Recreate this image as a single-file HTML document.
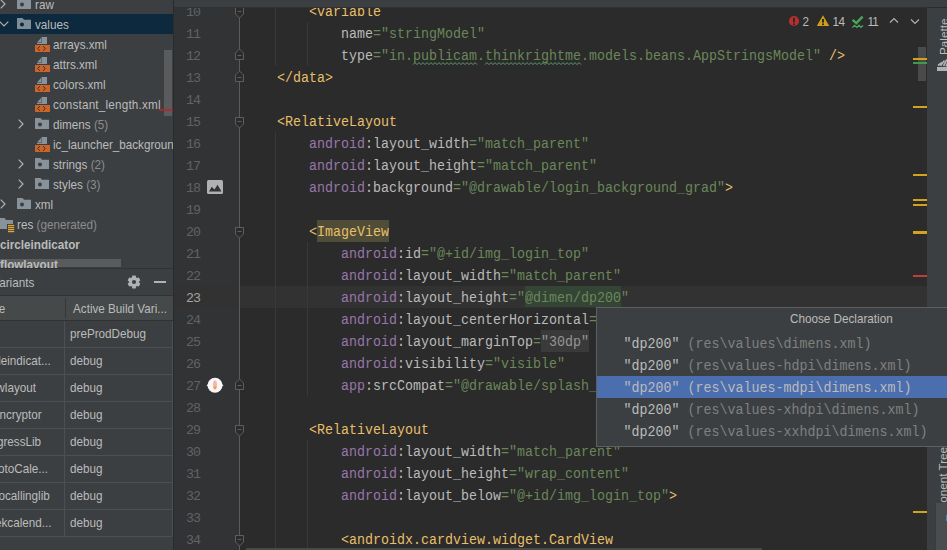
<!DOCTYPE html>
<html><head><meta charset="utf-8"><style>
*{margin:0;padding:0;box-sizing:border-box}
html,body{width:947px;height:550px;overflow:hidden;background:#2B2B2B}
body{position:relative;font-family:"Liberation Sans",sans-serif}
.a{position:absolute}
svg{position:absolute;overflow:visible}
#left{position:absolute;left:0;top:0;width:173px;height:550px;background:#3C3F41;overflow:hidden}
.tr{position:absolute;left:0;height:20px;width:173px;font-size:11.7px;line-height:20px;color:#BBBBBB;white-space:nowrap}
.tt{position:absolute;top:0.5px;transform:scaleY(1.07);transform-origin:0 14.06px}
.gr{color:#8C8C8C}
.ln{position:absolute;left:170px;width:30px;letter-spacing:-1px;text-align:right;font-family:"Liberation Mono",monospace;font-size:13.333px;line-height:22px;color:#606366;height:22px}
.cl{position:absolute;left:245px;height:22px;font-family:"Liberation Mono",monospace;font-size:13.333px;line-height:22px;white-space:pre;color:#A9B7C6;transform:scaleY(1.12);transform-origin:0 14.6px}
.tg{color:#E8BF6A}
.at{color:#BABABA}
.ns{color:#9876AA}
.vl{color:#6A8759}
.bv{position:absolute;height:27px;font-size:11.7px;line-height:27px;color:#BBBBBB;white-space:nowrap;transform:scaleY(1.07);transform-origin:0 17.55px}
.pi{position:absolute;left:0;width:400px;height:22px;font-family:"Liberation Mono",monospace;font-size:13.333px;line-height:22px;white-space:pre;color:#BBBBBB;transform:scaleY(1.1);transform-origin:0 14.6px}
.pg{color:#808080}
</style></head><body>
<div id="left">
<div class="a" style="left:0;top:14px;width:173px;height:20px;background:#0D293E"></div>
<svg style="left:0px;top:-1.5px" width="6" height="10" viewBox="0 0 6 10"><path d="M0.7 0.7L5 5L0.7 9.3" stroke="#AFB1B3" stroke-width="1.2" fill="none"/></svg>
<svg class="fi" style="left:17px;top:-2px" width="14" height="11" viewBox="0 0 14 11"><path d="M0 0H5.5L7 1.8H14V11H0Z" fill="#9AA7B0" fill-opacity="0.8"/><circle cx="5" cy="6.4" r="2" fill="#3C3F41"/></svg>
<div class="tr" style="top:-6px"><span class="tt" style="left:35px;">raw</span></div>
<svg style="left:-1px;top:21px" width="10" height="6" viewBox="0 0 10 6"><path d="M0.7 0.7L5 5L9.3 0.7" stroke="#AFB1B3" stroke-width="1.2" fill="none"/></svg>
<svg class="fi" style="left:17px;top:18px" width="14" height="11" viewBox="0 0 14 11"><path d="M0 0H5.5L7 1.8H14V11H0Z" fill="#9AA7B0" fill-opacity="0.8"/><circle cx="5" cy="6.4" r="2" fill="#0D293E"/></svg>
<div class="tr" style="top:14px"><span class="tt" style="left:35px;">values</span></div>
<svg style="left:35px;top:37px" width="15" height="18" viewBox="0 0 15 18"><path d="M2 6H6.5V0H12V7H2Z" fill="#9AA7B0" fill-opacity="0.8"/><path d="M2 5.5L6 1V5.5Z" fill="#9AA7B0" fill-opacity="0.8"/><rect x="0" y="8" width="15" height="7" fill="#C8652C"/><path d="M5 9.2L2.6 11.5L5 13.8M8 9.2L10.4 11.5L8 13.8" stroke="#4A2410" stroke-width="0.9" fill="none"/></svg>
<div class="tr" style="top:34px"><span class="tt" style="left:53px;">arrays.xml</span></div>
<svg style="left:35px;top:57px" width="15" height="18" viewBox="0 0 15 18"><path d="M2 6H6.5V0H12V7H2Z" fill="#9AA7B0" fill-opacity="0.8"/><path d="M2 5.5L6 1V5.5Z" fill="#9AA7B0" fill-opacity="0.8"/><rect x="0" y="8" width="15" height="7" fill="#C8652C"/><path d="M5 9.2L2.6 11.5L5 13.8M8 9.2L10.4 11.5L8 13.8" stroke="#4A2410" stroke-width="0.9" fill="none"/></svg>
<div class="tr" style="top:54px"><span class="tt" style="left:53px;">attrs.xml</span></div>
<svg style="left:35px;top:77px" width="15" height="18" viewBox="0 0 15 18"><path d="M2 6H6.5V0H12V7H2Z" fill="#9AA7B0" fill-opacity="0.8"/><path d="M2 5.5L6 1V5.5Z" fill="#9AA7B0" fill-opacity="0.8"/><rect x="0" y="8" width="15" height="7" fill="#C8652C"/><path d="M5 9.2L2.6 11.5L5 13.8M8 9.2L10.4 11.5L8 13.8" stroke="#4A2410" stroke-width="0.9" fill="none"/></svg>
<div class="tr" style="top:74px"><span class="tt" style="left:53px;">colors.xml</span></div>
<svg style="left:35px;top:97px" width="15" height="18" viewBox="0 0 15 18"><path d="M2 6H6.5V0H12V7H2Z" fill="#9AA7B0" fill-opacity="0.8"/><path d="M2 5.5L6 1V5.5Z" fill="#9AA7B0" fill-opacity="0.8"/><rect x="0" y="8" width="15" height="7" fill="#C8652C"/><path d="M5 9.2L2.6 11.5L5 13.8M8 9.2L10.4 11.5L8 13.8" stroke="#4A2410" stroke-width="0.9" fill="none"/></svg>
<div class="tr" style="top:94px"><span class="tt" style="left:53px;letter-spacing:0.2px;">constant_length.xml</span></div>
<svg style="left:18px;top:118.5px" width="6" height="10" viewBox="0 0 6 10"><path d="M0.7 0.7L5 5L0.7 9.3" stroke="#AFB1B3" stroke-width="1.2" fill="none"/></svg>
<svg class="fi" style="left:35px;top:118px" width="14" height="11" viewBox="0 0 14 11"><path d="M0 0H5.5L7 1.8H14V11H0Z" fill="#9AA7B0" fill-opacity="0.8"/><circle cx="5" cy="6.4" r="2" fill="#3C3F41"/></svg>
<div class="tr" style="top:114px"><span class="tt" style="left:53px;">dimens<span class="gr"> (5)</span></span></div>
<svg style="left:35px;top:137px" width="15" height="18" viewBox="0 0 15 18"><path d="M2 6H6.5V0H12V7H2Z" fill="#9AA7B0" fill-opacity="0.8"/><path d="M2 5.5L6 1V5.5Z" fill="#9AA7B0" fill-opacity="0.8"/><rect x="0" y="8" width="15" height="7" fill="#C8652C"/><path d="M5 9.2L2.6 11.5L5 13.8M8 9.2L10.4 11.5L8 13.8" stroke="#4A2410" stroke-width="0.9" fill="none"/></svg>
<div class="tr" style="top:134px"><span class="tt" style="left:53px;">ic_launcher_background.xml</span></div>
<svg style="left:18px;top:158.5px" width="6" height="10" viewBox="0 0 6 10"><path d="M0.7 0.7L5 5L0.7 9.3" stroke="#AFB1B3" stroke-width="1.2" fill="none"/></svg>
<svg class="fi" style="left:35px;top:158px" width="14" height="11" viewBox="0 0 14 11"><path d="M0 0H5.5L7 1.8H14V11H0Z" fill="#9AA7B0" fill-opacity="0.8"/><circle cx="5" cy="6.4" r="2" fill="#3C3F41"/></svg>
<div class="tr" style="top:154px"><span class="tt" style="left:53px;">strings<span class="gr"> (2)</span></span></div>
<svg style="left:18px;top:178.5px" width="6" height="10" viewBox="0 0 6 10"><path d="M0.7 0.7L5 5L0.7 9.3" stroke="#AFB1B3" stroke-width="1.2" fill="none"/></svg>
<svg class="fi" style="left:35px;top:178px" width="14" height="11" viewBox="0 0 14 11"><path d="M0 0H5.5L7 1.8H14V11H0Z" fill="#9AA7B0" fill-opacity="0.8"/><circle cx="5" cy="6.4" r="2" fill="#3C3F41"/></svg>
<div class="tr" style="top:174px"><span class="tt" style="left:53px;">styles<span class="gr"> (3)</span></span></div>
<svg style="left:0px;top:198.5px" width="6" height="10" viewBox="0 0 6 10"><path d="M0.7 0.7L5 5L0.7 9.3" stroke="#AFB1B3" stroke-width="1.2" fill="none"/></svg>
<svg class="fi" style="left:17px;top:198px" width="14" height="11" viewBox="0 0 14 11"><path d="M0 0H5.5L7 1.8H14V11H0Z" fill="#9AA7B0" fill-opacity="0.8"/><circle cx="5" cy="6.4" r="2" fill="#3C3F41"/></svg>
<div class="tr" style="top:194px"><span class="tt" style="left:35px;">xml</span></div>
<svg style="left:0px;top:218px" width="15" height="15" viewBox="0 0 15 15"><path d="M0 0H4.5L6 2H13V6H7V11H0Z" fill="#9AA7B0" fill-opacity="0.8"/><rect x="8" y="6.9" width="6.2" height="1.3" fill="#E3A535"/><rect x="8" y="8.9" width="6.2" height="1.3" fill="#E3A535"/><rect x="8" y="10.9" width="6.2" height="1.3" fill="#E3A535"/><rect x="8" y="12.9" width="6.2" height="1.3" fill="#E3A535"/></svg>
<div class="tr" style="top:214px"><span class="tt" style="left:17px">res<span class="gr"> (generated)</span></span></div>
<div class="tr" style="top:234px;font-weight:bold"><span class="tt" style="left:0px">circleindicator</span></div>
<div class="a" style="left:0;top:259px;width:121px;height:8px;background:#595B5D"></div>
<div class="tr" style="top:254px;height:14px;overflow:hidden;font-weight:bold"><span class="tt" style="left:0px">flowlayout</span></div>
<div class="a" style="left:164px;top:50px;width:8px;height:66px;background:#595B5D"></div>
<div class="a" style="left:159px;top:109px;width:14px;height:2px;background:rgba(185,38,38,0.8)"></div>
<div class="a" style="left:0;top:268px;width:173px;height:1px;background:#323232"></div>
<div class="tr" style="top:272px"><span class="tt" style="left:-37px">Build Variants</span></div>
<svg style="left:127px;top:275px" width="14" height="14" viewBox="0 0 14 14"><path d="M4.85 2.60 L5.40 0.60 L8.60 0.60 L9.15 2.60 L9.74 2.94 L11.75 2.42 L13.34 5.18 L11.89 6.66 L11.89 7.34 L13.34 8.82 L11.75 11.58 L9.74 11.06 L9.15 11.40 L8.60 13.40 L5.40 13.40 L4.85 11.40 L4.26 11.06 L2.25 11.58 L0.66 8.82 L2.11 7.34 L2.11 6.66 L0.66 5.18 L2.25 2.42 L4.26 2.94Z" fill="#AFB1B3"/><circle cx="7" cy="7" r="2.1" fill="#3C3F41"/></svg>
<div class="a" style="left:154px;top:281px;width:12px;height:2px;background:#AFB1B3"></div>
<div class="a" style="left:0;top:295px;width:173px;height:1px;background:#323232"></div>
<div class="a" style="left:0;top:296px;width:173px;height:24px;background:#45494A"></div>
<div class="a" style="left:65px;top:298px;width:1px;height:20px;background:#353739"></div>
<div class="bv" style="top:295px;left:-33px">Module</div>
<div class="bv" style="top:295px;left:73px">Active Build Vari...</div>
<div class="a" style="left:0;top:320px;width:173px;height:1px;background:#323232"></div>
<div class="bv" style="top:320px;left:-30px">app</div>
<div class="bv" style="top:320px;left:70px">preProdDebug</div>
<div class="a" style="left:0;top:347px;width:172px;height:1px;background:#4D5052"></div>
<div class="bv" style="top:347px;left:-20px">circleindicat...</div>
<div class="bv" style="top:347px;left:70px">debug</div>
<div class="a" style="left:0;top:374px;width:172px;height:1px;background:#4D5052"></div>
<div class="bv" style="top:374px;left:-16px">flowlayout</div>
<div class="bv" style="top:374px;left:70px">debug</div>
<div class="a" style="left:0;top:401px;width:172px;height:1px;background:#4D5052"></div>
<div class="bv" style="top:401px;left:-7px">encryptor</div>
<div class="bv" style="top:401px;left:70px">debug</div>
<div class="a" style="left:0;top:428px;width:172px;height:1px;background:#4D5052"></div>
<div class="bv" style="top:428px;left:-20px">progressLib</div>
<div class="bv" style="top:428px;left:70px">debug</div>
<div class="a" style="left:0;top:455px;width:172px;height:1px;background:#4D5052"></div>
<div class="bv" style="top:455px;left:-15px">photoCale...</div>
<div class="bv" style="top:455px;left:70px">debug</div>
<div class="a" style="left:0;top:482px;width:172px;height:1px;background:#4D5052"></div>
<div class="bv" style="top:482px;left:-23px">videocallinglib</div>
<div class="bv" style="top:482px;left:70px">debug</div>
<div class="a" style="left:0;top:509px;width:172px;height:1px;background:#4D5052"></div>
<div class="bv" style="top:509px;left:-20px">weekcalend...</div>
<div class="bv" style="top:509px;left:70px">debug</div>
<div class="a" style="left:0;top:536px;width:172px;height:1px;background:#4D5052"></div>
<div class="a" style="left:64px;top:321px;width:1px;height:215px;background:#4D5052"></div>
<div class="a" style="left:172px;top:321px;width:1px;height:215px;background:#4D5052"></div>
</div>
<div class="a" style="left:173px;top:0;width:1px;height:550px;background:#2B2B2B"></div>
<div class="a" style="left:174px;top:0;width:65px;height:550px;background:#313335"></div>
<div class="a" style="left:240px;top:0;width:687px;height:550px;background:#2B2B2B"></div>
<div class="a" style="left:174px;top:286px;width:753px;height:22px;background:#323232"></div>
<div class="a" style="left:239px;top:0;width:1px;height:550px;background:#5A5A5A"></div>
<div class="a" style="left:275px;top:0px;width:1px;height:66px;background:#393939"></div>
<div class="a" style="left:307px;top:22px;width:1px;height:44px;background:#393939"></div>
<div class="a" style="left:275px;top:132px;width:1px;height:418px;background:#393939"></div>
<div class="a" style="left:307px;top:242px;width:1px;height:154px;background:#393939"></div>
<div class="a" style="left:307px;top:440px;width:1px;height:110px;background:#393939"></div>
<div class="a" style="left:317px;top:220px;width:72px;height:22px;background:#4F4D37"></div>
<div class="a" style="left:525px;top:286px;width:96px;height:21px;background:#354535"></div>
<div class="a" style="left:541px;top:330px;width:48px;height:22px;background:#3A3A3A"></div>
<div class="ln" style="top:1.5px;color:#606366">10</div>
<div class="cl" style="top:1.5px">        <span class="tg">&lt;variable</span></div>
<div class="ln" style="top:23.5px;color:#606366">11</div>
<div class="cl" style="top:23.5px">            <span class="at">name</span><span class="vl">=&quot;stringModel&quot;</span></div>
<div class="ln" style="top:45.5px;color:#606366">12</div>
<div class="cl" style="top:45.5px">            <span class="at">type</span><span class="vl">=&quot;in.publicam.thinkrightme.models.beans.AppStringsModel&quot;</span> <span class="tg">/&gt;</span></div>
<div class="ln" style="top:67.5px;color:#606366">13</div>
<div class="cl" style="top:67.5px">    <span class="tg">&lt;/data&gt;</span></div>
<div class="ln" style="top:89.5px;color:#606366">14</div>
<div class="ln" style="top:111.5px;color:#606366">15</div>
<div class="cl" style="top:111.5px">    <span class="tg">&lt;RelativeLayout</span></div>
<div class="ln" style="top:133.5px;color:#606366">16</div>
<div class="cl" style="top:133.5px">        <span class="ns">android</span><span class="at">:</span><span class="at">layout_width</span><span class="vl">=&quot;match_parent&quot;</span></div>
<div class="ln" style="top:155.5px;color:#606366">17</div>
<div class="cl" style="top:155.5px">        <span class="ns">android</span><span class="at">:</span><span class="at">layout_height</span><span class="vl">=&quot;match_parent&quot;</span></div>
<div class="ln" style="top:177.5px;color:#606366">18</div>
<div class="cl" style="top:177.5px">        <span class="ns">android</span><span class="at">:</span><span class="at">background</span><span class="vl">=&quot;@drawable/login_background_grad&quot;</span><span class="tg">&gt;</span></div>
<div class="ln" style="top:199.5px;color:#606366">19</div>
<div class="ln" style="top:221.5px;color:#606366">20</div>
<div class="cl" style="top:221.5px">        <span class="tg">&lt;ImageView</span></div>
<div class="ln" style="top:243.5px;color:#606366">21</div>
<div class="cl" style="top:243.5px">            <span class="ns">android</span><span class="at">:</span><span class="at">id</span><span class="vl">=&quot;@+id/img_login_top&quot;</span></div>
<div class="ln" style="top:265.5px;color:#606366">22</div>
<div class="cl" style="top:265.5px">            <span class="ns">android</span><span class="at">:</span><span class="at">layout_width</span><span class="vl">=&quot;match_parent&quot;</span></div>
<div class="ln" style="top:287.5px;color:#A4A3A3">23</div>
<div class="cl" style="top:287.5px">            <span class="ns">android</span><span class="at">:</span><span class="at">layout_height</span><span class="vl">=&quot;@dimen/dp200&quot;</span></div>
<div class="ln" style="top:309.5px;color:#606366">24</div>
<div class="cl" style="top:309.5px">            <span class="ns">android</span><span class="at">:</span><span class="at">layout_centerHorizontal</span><span class="vl">=&quot;true&quot;</span></div>
<div class="ln" style="top:331.5px;color:#606366">25</div>
<div class="cl" style="top:331.5px">            <span class="ns">android</span><span class="at">:</span><span class="at">layout_marginTop</span><span class="vl">=</span><span style="color:#959595">"30dp"</span></div>
<div class="ln" style="top:353.5px;color:#606366">26</div>
<div class="cl" style="top:353.5px">            <span class="ns">android</span><span class="at">:</span><span class="at">visibility</span><span class="vl">=&quot;visible&quot;</span></div>
<div class="ln" style="top:375.5px;color:#606366">27</div>
<div class="cl" style="top:375.5px">            <span class="ns">app</span><span class="at">:</span><span class="at">srcCompat</span><span class="vl">=&quot;@drawable/splash_top_image&quot;</span></div>
<div class="ln" style="top:397.5px;color:#606366">28</div>
<div class="ln" style="top:419.5px;color:#606366">29</div>
<div class="cl" style="top:419.5px">        <span class="tg">&lt;RelativeLayout</span></div>
<div class="ln" style="top:441.5px;color:#606366">30</div>
<div class="cl" style="top:441.5px">            <span class="ns">android</span><span class="at">:</span><span class="at">layout_width</span><span class="vl">=&quot;match_parent&quot;</span></div>
<div class="ln" style="top:463.5px;color:#606366">31</div>
<div class="cl" style="top:463.5px">            <span class="ns">android</span><span class="at">:</span><span class="at">layout_height</span><span class="vl">=&quot;wrap_content&quot;</span></div>
<div class="ln" style="top:485.5px;color:#606366">32</div>
<div class="cl" style="top:485.5px">            <span class="ns">android</span><span class="at">:</span><span class="at">layout_below</span><span class="vl">=&quot;@+id/img_login_top&quot;</span><span class="tg">&gt;</span></div>
<div class="ln" style="top:507.5px;color:#606366">33</div>
<div class="ln" style="top:529.5px;color:#606366">34</div>
<div class="cl" style="top:529.5px">            <span class="tg">&lt;androidx.cardview.widget.CardView</span></div>
<svg style="left:235px;top:7px" width="9" height="12" viewBox="0 0 9 12"><path d="M0.5 0.5H8.5V7L4.5 11L0.5 7Z" fill="#2B2B2B" stroke="#5E5E5E" stroke-width="1"/><path d="M2.5 4.5H6.5" stroke="#5E5E5E" stroke-width="1"/></svg>
<svg style="left:235px;top:117px" width="9" height="12" viewBox="0 0 9 12"><path d="M0.5 0.5H8.5V7L4.5 11L0.5 7Z" fill="#2B2B2B" stroke="#5E5E5E" stroke-width="1"/><path d="M2.5 4.5H6.5" stroke="#5E5E5E" stroke-width="1"/></svg>
<svg style="left:235px;top:227px" width="9" height="12" viewBox="0 0 9 12"><path d="M0.5 0.5H8.5V7L4.5 11L0.5 7Z" fill="#2B2B2B" stroke="#5E5E5E" stroke-width="1"/><path d="M2.5 4.5H6.5" stroke="#5E5E5E" stroke-width="1"/></svg>
<svg style="left:235px;top:425px" width="9" height="12" viewBox="0 0 9 12"><path d="M0.5 0.5H8.5V7L4.5 11L0.5 7Z" fill="#2B2B2B" stroke="#5E5E5E" stroke-width="1"/><path d="M2.5 4.5H6.5" stroke="#5E5E5E" stroke-width="1"/></svg>
<svg style="left:235px;top:535px" width="9" height="12" viewBox="0 0 9 12"><path d="M0.5 0.5H8.5V7L4.5 11L0.5 7Z" fill="#2B2B2B" stroke="#5E5E5E" stroke-width="1"/><path d="M2.5 4.5H6.5" stroke="#5E5E5E" stroke-width="1"/></svg>
<svg style="left:235px;top:48px" width="9" height="12" viewBox="0 0 9 12"><path d="M0.5 11.5H8.5V5L4.5 1L0.5 5Z" fill="#2B2B2B" stroke="#5E5E5E" stroke-width="1"/><path d="M2.5 7.5H6.5" stroke="#5E5E5E" stroke-width="1"/></svg>
<svg style="left:235px;top:70px" width="9" height="12" viewBox="0 0 9 12"><path d="M0.5 11.5H8.5V5L4.5 1L0.5 5Z" fill="#2B2B2B" stroke="#5E5E5E" stroke-width="1"/><path d="M2.5 7.5H6.5" stroke="#5E5E5E" stroke-width="1"/></svg>
<svg style="left:235px;top:378px" width="9" height="12" viewBox="0 0 9 12"><path d="M0.5 11.5H8.5V5L4.5 1L0.5 5Z" fill="#2B2B2B" stroke="#5E5E5E" stroke-width="1"/><path d="M2.5 7.5H6.5" stroke="#5E5E5E" stroke-width="1"/></svg>
<svg style="left:207px;top:180px" width="16" height="14" viewBox="0 0 16 14"><rect x="0" y="0" width="16" height="14" rx="1.5" fill="#AFB1B3"/><path d="M2 11.5L4.7 6.8L7.5 9.6L10.5 4.8L14.5 11.5Z" fill="#313335"/></svg>
<svg style="left:206px;top:376px" width="18" height="18" viewBox="0 0 18 18"><path d="M0.5 9.3L2 8.3L16 8.3L17.5 9.3L16 10.3L2 10.3Z" fill="#F4EEEE"/><circle cx="9" cy="9.3" r="7.5" fill="#FBF6F6"/><ellipse cx="9" cy="8.8" rx="2" ry="4.3" fill="#EFB7B0"/><ellipse cx="9" cy="11.8" rx="1.5" ry="1.6" fill="#F2A43A"/></svg>
<div class="a" style="left:913px;top:106px;width:14px;height:2px;background:#D6A21E"></div>
<div class="a" style="left:913px;top:174px;width:14px;height:2px;background:#D6A21E"></div>
<div class="a" style="left:913px;top:199px;width:14px;height:2px;background:#D6A21E"></div>
<div class="a" style="left:913px;top:204px;width:14px;height:2px;background:#D6A21E"></div>
<div class="a" style="left:913px;top:231px;width:14px;height:3px;background:#D6A21E"></div>
<div class="a" style="left:913px;top:275px;width:14px;height:2px;background:#BC3F3C"></div>
<div class="a" style="left:913px;top:511px;width:14px;height:2px;background:#D6A21E"></div>
<div class="a" style="left:918px;top:47px;width:8px;height:34px;background:#4A4A4A"></div>
<div class="a" style="left:913px;top:58px;width:14px;height:2px;background:#D6A21E"></div>
<div class="a" style="left:913px;top:62px;width:14px;height:2px;background:#3E9B4B"></div>
<svg style="left:788px;top:15px" width="12" height="12" viewBox="0 0 12 12"><circle cx="6" cy="6" r="5.1" fill="#B82E2E"/><rect x="5" y="2.8" width="2" height="4.6" fill="#2B2B2B"/><rect x="5" y="8.4" width="2" height="1.7" fill="#2B2B2B"/></svg>
<div class="a" style="left:802.5px;top:14px;font-size:11.7px;line-height:16px;color:#BBBBBB;transform:scaleY(1.12);transform-origin:0 100%">2</div>
<svg style="left:816px;top:15px" width="14" height="12" viewBox="0 0 14 12"><path d="M7 0.2L13.2 11.1H0.8Z" fill="#D09D16"/><rect x="6" y="4" width="2" height="3.6" fill="#2B2B2B"/><rect x="6" y="8.5" width="2" height="1.6" fill="#2B2B2B"/></svg>
<div class="a" style="left:832.5px;top:14px;font-size:11.7px;line-height:16px;color:#BBBBBB;transform:scaleY(1.12);transform-origin:0 100%;letter-spacing:-0.6px">14</div>
<svg style="left:848px;top:12px" width="20" height="20" viewBox="0 0 20 20"><path d="M4.6 7.9L8.3 11.1L14.6 4.6" stroke="#4AA55A" stroke-width="2.5" fill="none"/><path d="M4.2 15.6L6.6 13.3L8.9 15.4L11 13.3L13 15.4L15 13.5" stroke="#4AA55A" stroke-width="1.3" fill="none"/></svg>
<div class="a" style="left:867.5px;top:14px;font-size:11.7px;line-height:16px;color:#BBBBBB;transform:scaleY(1.12);transform-origin:0 100%;letter-spacing:-1px">11</div>
<svg style="left:889px;top:17px" width="10" height="7" viewBox="0 0 10 7"><path d="M1 5.5L5 1.5L9 5.5" stroke="#AFB1B3" stroke-width="1.2" fill="none"/></svg>
<svg style="left:910px;top:18px" width="10" height="7" viewBox="0 0 10 7"><path d="M1 1.5L5 5.5L9 1.5" stroke="#AFB1B3" stroke-width="1.2" fill="none"/></svg>
<svg style="left:413px;top:62px" width="66" height="4" viewBox="0 0 66 4"><polyline points="0.0 2.6 2.0 0.6 4.0 2.6 6.0 0.6 8.0 2.6 10.0 0.6 12.0 2.6 14.0 0.6 16.0 2.6 18.0 0.6 20.0 2.6 22.0 0.6 24.0 2.6 26.0 0.6 28.0 2.6 30.0 0.6 32.0 2.6 34.0 0.6 36.0 2.6 38.0 0.6 40.0 2.6 42.0 0.6 44.0 2.6 46.0 0.6 48.0 2.6 50.0 0.6 52.0 2.6 54.0 0.6 56.0 2.6 58.0 0.6 60.0 2.6 62.0 0.6 64.0 2.6" stroke="#5E9C68" stroke-width="1" fill="none"/></svg>
<svg style="left:485px;top:62px" width="98" height="4" viewBox="0 0 98 4"><polyline points="0.0 2.6 2.0 0.6 4.0 2.6 6.0 0.6 8.0 2.6 10.0 0.6 12.0 2.6 14.0 0.6 16.0 2.6 18.0 0.6 20.0 2.6 22.0 0.6 24.0 2.6 26.0 0.6 28.0 2.6 30.0 0.6 32.0 2.6 34.0 0.6 36.0 2.6 38.0 0.6 40.0 2.6 42.0 0.6 44.0 2.6 46.0 0.6 48.0 2.6 50.0 0.6 52.0 2.6 54.0 0.6 56.0 2.6 58.0 0.6 60.0 2.6 62.0 0.6 64.0 2.6 66.0 0.6 68.0 2.6 70.0 0.6 72.0 2.6 74.0 0.6 76.0 2.6 78.0 0.6 80.0 2.6 82.0 0.6 84.0 2.6 86.0 0.6 88.0 2.6 90.0 0.6 92.0 2.6 94.0 0.6 96.0 2.6" stroke="#5E9C68" stroke-width="1" fill="none"/></svg>
<div class="a" style="left:246px;top:548px;width:516px;height:2px;background:#4A4A4A;border-radius:1px 1px 0 0"></div>
<div class="a" style="left:174px;top:0;width:773px;height:7px;background:#3C3F41"></div>
<div class="a" style="left:174px;top:7px;width:753px;height:1px;background:#323232"></div>
<div class="a" style="left:927px;top:8px;width:20px;height:542px;background:#3C3F41"></div>
<div class="a" style="left:936.5px;top:55px;transform:rotate(-90deg);transform-origin:0 0;font-size:11.7px;line-height:14px;color:#BBBBBB;white-space:nowrap">Palette</div>
<div class="a" style="left:935.5px;top:534px;transform:rotate(-90deg);transform-origin:0 0;font-size:11.7px;line-height:14px;color:#BBBBBB;white-space:nowrap">Component Tree</div>
<div class="a" style="left:935px;top:503px;width:12px;height:47px;background:#4A4D4F;border-left:1px solid #393B3D"></div><div class="a" style="left:946px;top:515px;width:1px;height:6px;background:#3592C4"></div>
<svg style="left:937px;top:59px" width="12" height="13" viewBox="0 0 12 13"><rect x="0" y="8" width="10" height="4" fill="#AFB1B3"/><path d="M1 6.5L5 3.5M3.5 6.8L7.5 1.5M6.5 7L10 0.5M9 7.3L11 3" stroke="#AFB1B3" stroke-width="1.6" fill="none"/></svg>
<div class="a" style="left:596px;top:307px;width:360px;height:140px;background:#3C3F41;border:1px solid #5E6060"></div>
<div class="a" style="left:790px;top:308px;font-size:11.7px;line-height:22px;color:#BBBBBB;white-space:nowrap;transform:scaleY(1.09);transform-origin:0 15.06px">Choose Declaration</div>
<div class="pi" style="left:623.5px;top:334px">"dp200" <span class="pg">(res\values\dimens.xml)</span></div>
<div class="pi" style="left:623.5px;top:356px">"dp200" <span class="pg">(res\values-hdpi\dimens.xml)</span></div>
<div class="a" style="left:597px;top:398px;width:350px;height:22px;background:#4B6EAF;top:376px"></div>
<div class="pi" style="left:623.5px;top:378px">"dp200" (res\values-mdpi\dimens.xml)</div>
<div class="pi" style="left:623.5px;top:400px">"dp200" <span class="pg">(res\values-xhdpi\dimens.xml)</span></div>
<div class="pi" style="left:623.5px;top:422px">"dp200" <span class="pg">(res\values-xxhdpi\dimens.xml)</span></div>
</body></html>
